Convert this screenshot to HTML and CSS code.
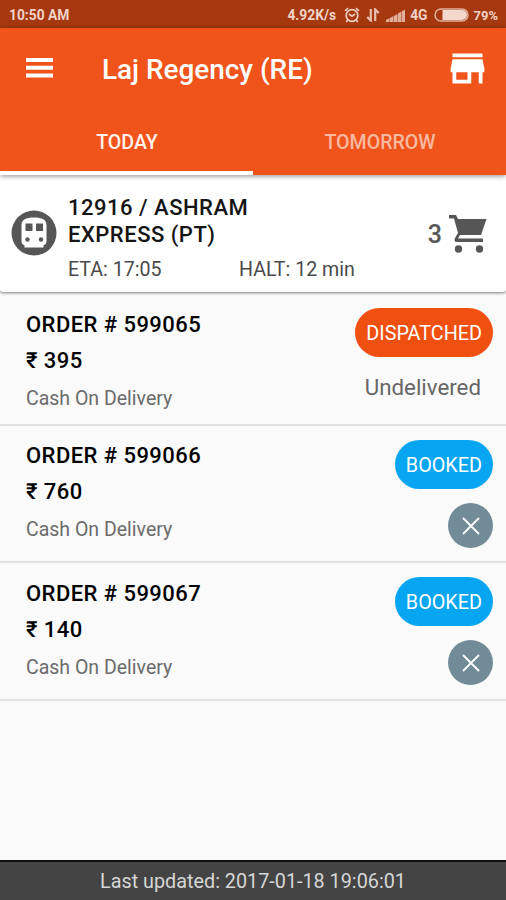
FILE: index.html
```html
<!DOCTYPE html>
<html lang="en">
<head>
  <meta charset="UTF-8">
  <meta name="viewport" content="width=device-width, initial-scale=1.0">
  <title>Laj Regency (RE)</title>
  <link rel="stylesheet" href="styles.css">
</head>
<body>
  <!-- Status bar -->
  <div class="status-bar">
    <span class="time">10:50 AM</span>
    <div class="status-icons">
      <span class="speed">4.92K/s</span>
      <svg class="alarm" width="16" height="16" viewBox="0 0 16 16" fill="none" stroke="#f1cdbf" stroke-width="1.7">
        <circle cx="8" cy="8.5" r="5.8"/>
        <path d="M5 7l3 2.3L11 7M1 4l3-2.8M15 4l-3-2.8M3.8 13l-1.6 2M12.2 13l1.6 2"/>
      </svg>
      <svg class="data" width="14" height="14" viewBox="0 0 14 14" fill="none" stroke="#e9bfae" stroke-width="2.2">
        <path d="M4.8 1v11.5L1.2 9M9.2 13V1.5L12.8 5"/>
      </svg>
      <svg class="signal" width="19" height="13" viewBox="0 0 19 13" fill="#e0ae9a">
        <path d="M0 13v-2l3.5-2V13zM4 13V9l3.5-2V13zM8 13V7l3.5-2V13zM12 13V4.6l3.5-2V13zM16 13V2.2L19 .5V13z"/>
      </svg>
      <span class="network">4G</span>
      <svg class="battery" width="35" height="14" viewBox="0 0 35 14">
        <rect x="1" y="1" width="33" height="12" rx="6" fill="none" stroke="#e0b09d" stroke-width="1.5"/>
        <path d="M8.5 2H28a5 5 0 0 1 0 10H8.5z" fill="#f5d8cc"/>
      </svg>
      <span class="percent">79%</span>
    </div>
  </div>

  <!-- Toolbar and tabs -->
  <header class="header">
    <div class="toolbar">
      <svg class="menu" width="27" height="20" viewBox="0 0 27 20" fill="#fff">
        <path d="M0 0h27v4H0zM0 7.8h27v4H0zM0 15.5h27v4H0z"/>
      </svg>
      <h1>Laj Regency (RE)</h1>
      <svg class="store" width="45" height="45" viewBox="0 0 24 24" fill="#fff">
        <path d="M20 4H4v2h16V4zm1 10v-2l-1-5H4l-1 5v2h1v6h10v-6h4v6h2v-6h1zm-9 4H6v-4h6v4z"/>
      </svg>
    </div>
    <nav class="tabs">
      <div class="tab active"><span>TODAY</span></div>
      <div class="tab"><span>TOMORROW</span></div>
    </nav>
  </header>

  <!-- Train -->
  <section class="train">
    <svg class="train-icon" width="46" height="46" viewBox="0 0 46 46">
      <circle cx="23" cy="23" r="22.5" fill="#565656"/>
      <path fill="#fff" d="M10.5 15c0-5.5 4.5-7.5 12.5-7.5S35.5 9.5 35.5 15v16c0 2.600-1.3 4-3 4.300v2.200h-19v-2.200c-1.700-.3-3-1.7-3-4.300z"/>
      <path fill="#565656" d="M14.5 13.5h7v7.500h-7zM25 13.5h7v7.500h-7z"/>
      <circle cx="16.5" cy="29.500" r="2.200" fill="#565656"/>
      <circle cx="30" cy="29.500" r="2.200" fill="#565656"/>
    </svg>
    <div class="train-info">
      <h2>12916 / ASHRAM<br>EXPRESS (PT)</h2>
      <div class="times">
        <span class="eta">ETA: 17:05</span>
        <span class="halt">HALT: 12 min</span>
      </div>
    </div>
    <div class="cart">
      <span>3</span>
      <svg width="38" height="38" viewBox="0 0 38 38" fill="#565656">
        <path d="M0 0h7l2 4h28.500L32 20H11L9 23.500h25V27H7.500C5.500 27 5 25 6 23l3-5L5 3.500H0z"/>
        <circle cx="9.500" cy="34" r="3.700"/>
        <circle cx="30.500" cy="34" r="3.700"/>
      </svg>
    </div>
  </section>

  <!-- Orders -->
  <main class="orders">
    <div class="order first">
      <div class="order-info">
        <h3>ORDER # 599065</h3>
        <p class="price">₹ 395</p>
        <p class="payment">Cash On Delivery</p>
      </div>
      <div class="order-state">
        <span class="badge dispatched">DISPATCHED</span>
        <span class="note">Undelivered</span>
      </div>
    </div>
    <div class="order">
      <div class="order-info">
        <h3>ORDER # 599066</h3>
        <p class="price">₹ 760</p>
        <p class="payment">Cash On Delivery</p>
      </div>
      <div class="order-state">
        <span class="badge booked">BOOKED</span>
        <button class="cancel" aria-label="Cancel">
          <svg width="18" height="18" viewBox="0 0 18 18" stroke="#fff" stroke-width="1.8"><path d="M1 1l16 16M17 1L1 17"/></svg>
        </button>
      </div>
    </div>
    <div class="order last">
      <div class="order-info">
        <h3>ORDER # 599067</h3>
        <p class="price">₹ 140</p>
        <p class="payment">Cash On Delivery</p>
      </div>
      <div class="order-state">
        <span class="badge booked">BOOKED</span>
        <button class="cancel" aria-label="Cancel">
          <svg width="18" height="18" viewBox="0 0 18 18" stroke="#fff" stroke-width="1.8"><path d="M1 1l16 16M17 1L1 17"/></svg>
        </button>
      </div>
    </div>
  </main>

  <footer class="footer">Last updated: 2017-01-18 19:06:01</footer>
</body>
</html>
```
FILE: styles.css
```css
* {
  box-sizing: border-box;
}

body {
  margin: 0;
  height: 900px;
  display: flex;
  flex-direction: column;
  background: #fafafa;
  font-family: Roboto, "Noto Sans", sans-serif;
  overflow: hidden;
}

h1, h2, h3, p {
  margin: 0;
  font-weight: 500;
}

svg {
  display: block;
  flex: none;
}

/* Status bar */
.status-bar {
  height: 28px;
  flex: none;
  display: flex;
  justify-content: space-between;
  align-items: center;
  padding: 2px 8px 0 9px;
  background: #a5380f;
  color: #f3d3c7;
  font-size: 13.8px;
  font-weight: 700;
  white-space: nowrap;
}

.status-icons {
  display: flex;
  align-items: center;
}

.alarm {
  margin-left: 8px;
}

.data {
  margin-left: 6px;
}

.signal {
  margin: 0 5px 0 6px;
}

.battery {
  margin: 0 4px 0 7px;
}

.percent {
  font-size: 13px;
}

/* Header */
.header {
  height: 147px;
  flex: none;
  background: #f0541b;
  color: #fff;
  box-shadow: 0 1px 5px rgba(0, 0, 0, 0.45);
  position: relative;
}

.toolbar {
  height: 80px;
  display: flex;
  align-items: center;
  padding: 0 16px 0 26px;
}

.toolbar h1 {
  margin-left: 49px;
  flex: 1;
  font-size: 27.9px;
  line-height: 34px;
  padding-top: 3px;
}

.tabs {
  height: 67px;
  display: flex;
}

.tab {
  flex: 1;
  padding: 23px 0 0 1px;
  text-align: center;
  font-size: 19.6px;
  line-height: 24px;
  font-weight: 500;
  color: #f9b9a0;
}

.tab.active {
  color: #fff0ea;
  border-bottom: 4px solid #fff;
}

/* Train card */
.train {
  height: 117px;
  flex: none;
  display: flex;
  padding: 19px 19px 0 11px;
  background: #fff;
  border-radius: 0 0 3px 3px;
  box-shadow: 0 1px 3px rgba(0, 0, 0, 0.5);
}

.train-icon {
  margin-top: 16px;
}

.train-info {
  flex: 1;
  margin-left: 11px;
}

.train-info h2 {
  font-size: 22px;
  line-height: 27px;
  letter-spacing: 0.5px;
  color: #151515;
}

.times {
  display: flex;
  margin-top: 10px;
  font-size: 19.6px;
  line-height: 24px;
  color: #4a4a4a;
}

.eta {
  width: 171px;
}

.cart {
  display: flex;
  align-items: center;
  height: 45px;
  margin-top: 17px;
  gap: 7px;
  font-size: 25px;
  font-weight: 500;
  color: #565656;
}

.cart span {
  padding-top: 2px;
}

/* Orders */
.orders {
  flex: 1;
}

.order {
  height: 137px;
  display: flex;
  justify-content: space-between;
  padding: 14px 13px 0 26px;
  border-bottom: 2px solid #e2e2e2;
}

.order.first {
  height: 134px;
  padding-top: 16px;
}

.order.last {
  height: 138px;
}

.order-info {
  padding-top: 2px;
}

.order.first .order-info,
.order.last .order-info {
  padding-top: 3px;
}

.order h3,
.price {
  font-size: 22px;
  line-height: 28px;
  letter-spacing: 0.45px;
  color: #000;
}

.price {
  margin-top: 8px;
}

.payment {
  margin-top: 11px;
  font-size: 19.5px;
  line-height: 26px;
  font-weight: 400;
  color: #6b6b6b;
}

.order-state {
  display: flex;
  flex-direction: column;
  align-items: flex-end;
}

.badge {
  height: 49px;
  padding: 0 11px;
  border-radius: 25px;
  color: #fff;
  font-size: 19.8px;
  line-height: 51px;
}

.dispatched {
  background: #f0500f;
}

.booked {
  background: #07a5f2;
}

.note {
  margin: 16px 12px 0 0;
  font-size: 22.3px;
  line-height: 28px;
  color: #666;
}

.cancel {
  width: 45px;
  height: 45px;
  margin-top: 14px;
  padding: 0;
  display: flex;
  align-items: center;
  justify-content: center;
  border: none;
  border-radius: 50%;
  background: #718c97;
}

/* Footer */
.footer {
  height: 40px;
  flex: none;
  border-top: 2px solid #111;
  background: #444;
  color: #d6d6d6;
  font-size: 19.8px;
  line-height: 39px;
  text-align: center;
}
```
